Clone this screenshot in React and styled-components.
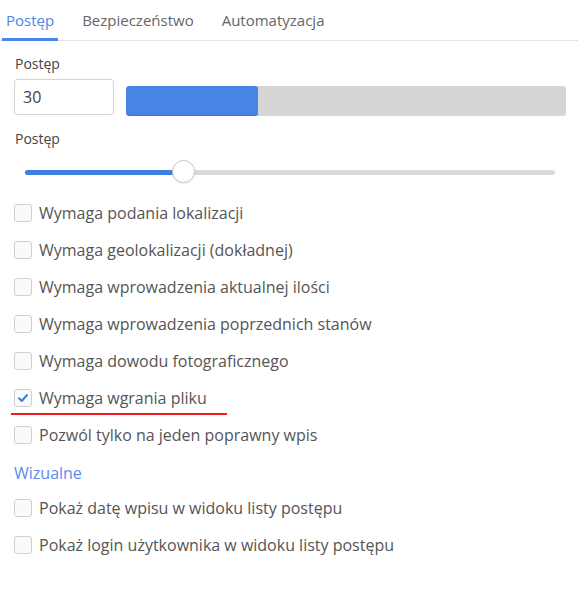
import React, { useState } from "react";
import styled, { createGlobalStyle } from "styled-components";

const GlobalStyle = createGlobalStyle`
  body {
    margin: 0;
    background: #fff;
    font-family: "Open Sans", "Noto Sans", sans-serif;
    color: #555;
  }
`;

const tabs = ["Postęp", "Bezpieczeństwo", "Automatyzacja"];

const options = [
  { label: "Wymaga podania lokalizacji", checked: false },
  { label: "Wymaga geolokalizacji (dokładnej)", checked: false },
  { label: "Wymaga wprowadzenia aktualnej ilości", checked: false },
  { label: "Wymaga wprowadzenia poprzednich stanów", checked: false },
  { label: "Wymaga dowodu fotograficznego", checked: false },
  { label: "Wymaga wgrania pliku", checked: true, marked: true },
  { label: "Pozwól tylko na jeden poprawny wpis", checked: false },
];

const visual = [
  { label: "Pokaż datę wpisu w widoku listy postępu", checked: false },
  { label: "Pokaż login użytkownika w widoku listy postępu", checked: false },
];

const CheckIcon = () => (
  <svg width="12" height="12" viewBox="0 0 12 12">
    <path
      d="M2 6.3 L4.8 9 L10 3"
      fill="none"
      stroke="#3f7fe0"
      strokeWidth="2"
      strokeLinecap="round"
      strokeLinejoin="round"
    />
  </svg>
);

const Option = ({ label, checked, marked }) => (
  <Row marked={marked}>
    <Box>{checked && <CheckIcon />}</Box>
    <RowLabel>{label}</RowLabel>
  </Row>
);

const App = () => {
  const [active, setActive] = useState(0);
  const [value, setValue] = useState("30");
  const percent = Math.min(100, Math.max(0, Number(value) || 0));

  return (
    <Page>
      <GlobalStyle />
      <TabBar>
        {tabs.map((tab, index) => (
          <Tab
            key={tab}
            active={index === active}
            onClick={() => setActive(index)}
          >
            {tab}
          </Tab>
        ))}
      </TabBar>
      <Content>
        <FieldLabel>Postęp</FieldLabel>
        <ProgressRow>
          <NumberInput value={value} onChange={(e) => setValue(e.target.value)} />
          <Bar>
            <BarFill style={{ width: `${percent}%` }} />
          </Bar>
        </ProgressRow>
        <FieldLabel top={15}>Postęp</FieldLabel>
        <Slider>
          <Track>
            <TrackFill style={{ width: `${percent}%` }} />
            <Thumb style={{ left: `${percent}%` }} />
          </Track>
        </Slider>
        <List top={10}>
          {options.map((option) => (
            <Option key={option.label} {...option} />
          ))}
        </List>
        <Heading>Wizualne</Heading>
        <List>
          {visual.map((option) => (
            <Option key={option.label} {...option} />
          ))}
        </List>
      </Content>
    </Page>
  );
};

const Page = styled.div`
  width: 583px;
  height: 595px;
`;

const TabBar = styled.div`
  width: 576px;
  height: 40px;
  padding-left: 2px;
  display: flex;
  gap: 20px;
  border-bottom: 1px solid #e3e3e3;
`;

const Tab = styled.div`
  padding: 0 4px;
  display: flex;
  align-items: center;
  font-size: 15px;
  color: ${(p) => (p.active ? "#4a86e8" : "#666")};
  border-bottom: 3px solid ${(p) => (p.active ? "#4a86e8" : "transparent")};
  margin-bottom: -1px;
  padding-top: 2px;
  cursor: pointer;
`;

const Content = styled.div`
  width: 552px;
  padding: 14px 0 0 14px;
  display: flex;
  flex-direction: column;
`;

const FieldLabel = styled.div`
  font-size: 14px;
  line-height: 18px;
  color: #444;
  margin-top: ${(p) => p.top || 0}px;
  padding-left: 1px;
`;

const ProgressRow = styled.div`
  margin-top: 6px;
  display: flex;
  align-items: flex-end;
  gap: 12px;
`;

const NumberInput = styled.input`
  box-sizing: border-box;
  width: 100px;
  height: 36px;
  border: 1px solid #d4d4d4;
  border-radius: 3px;
  padding: 0 8px;
  font-family: inherit;
  font-size: 16px;
  color: #444;
  outline: none;
`;

const Bar = styled.div`
  flex: 1;
  height: 30px;
  margin-bottom: -1px;
  background: #d6d6d6;
  border-radius: 3px;
  overflow: hidden;
`;

const BarFill = styled.div`
  height: 100%;
  background: #4884e6;
  border-radius: 3px;
  box-shadow: inset 0 -1px 0 rgba(0, 0, 0, 0.12);
`;

const Slider = styled.div`
  margin-top: 12px;
  height: 24px;
  padding: 0 11px;
  display: flex;
  align-items: center;
`;

const Track = styled.div`
  position: relative;
  flex: 1;
  height: 5px;
  border-radius: 3px;
  background: #dadada;
`;

const TrackFill = styled.div`
  height: 100%;
  border-radius: 3px;
  background: #3f7fe0;
`;

const Thumb = styled.div`
  position: absolute;
  top: 50%;
  width: 21px;
  height: 21px;
  margin: -12px 0 0 -12px;
  border-radius: 50%;
  background: #fff;
  border: 1px solid #c8c8c8;
  box-shadow: 0 1px 2px rgba(0, 0, 0, 0.08);
`;

const List = styled.div`
  display: flex;
  flex-direction: column;
  margin-top: ${(p) => p.top || 0}px;
`;

const Row = styled.div`
  position: relative;
  height: 37px;
  display: flex;
  align-items: center;
  gap: 7px;
  &::after {
    content: "";
    display: ${(p) => (p.marked ? "block" : "none")};
    position: absolute;
    left: -3px;
    top: 34px;
    width: 216px;
    height: 2px;
    background: #ee1c1c;
  }
`;

const Box = styled.div`
  box-sizing: border-box;
  width: 18px;
  height: 18px;
  border: 1px solid #cfcfcf;
  border-radius: 3px;
  background: #fafafa;
  display: flex;
  align-items: center;
  justify-content: center;
`;

const RowLabel = styled.span`
  font-size: 16px;
  color: #555;
`;

const Heading = styled.div`
  margin-top: 8px;
  font-size: 16px;
  line-height: 24px;
  color: #5b8def;
  margin-bottom: 4px;
`;

export default App;
